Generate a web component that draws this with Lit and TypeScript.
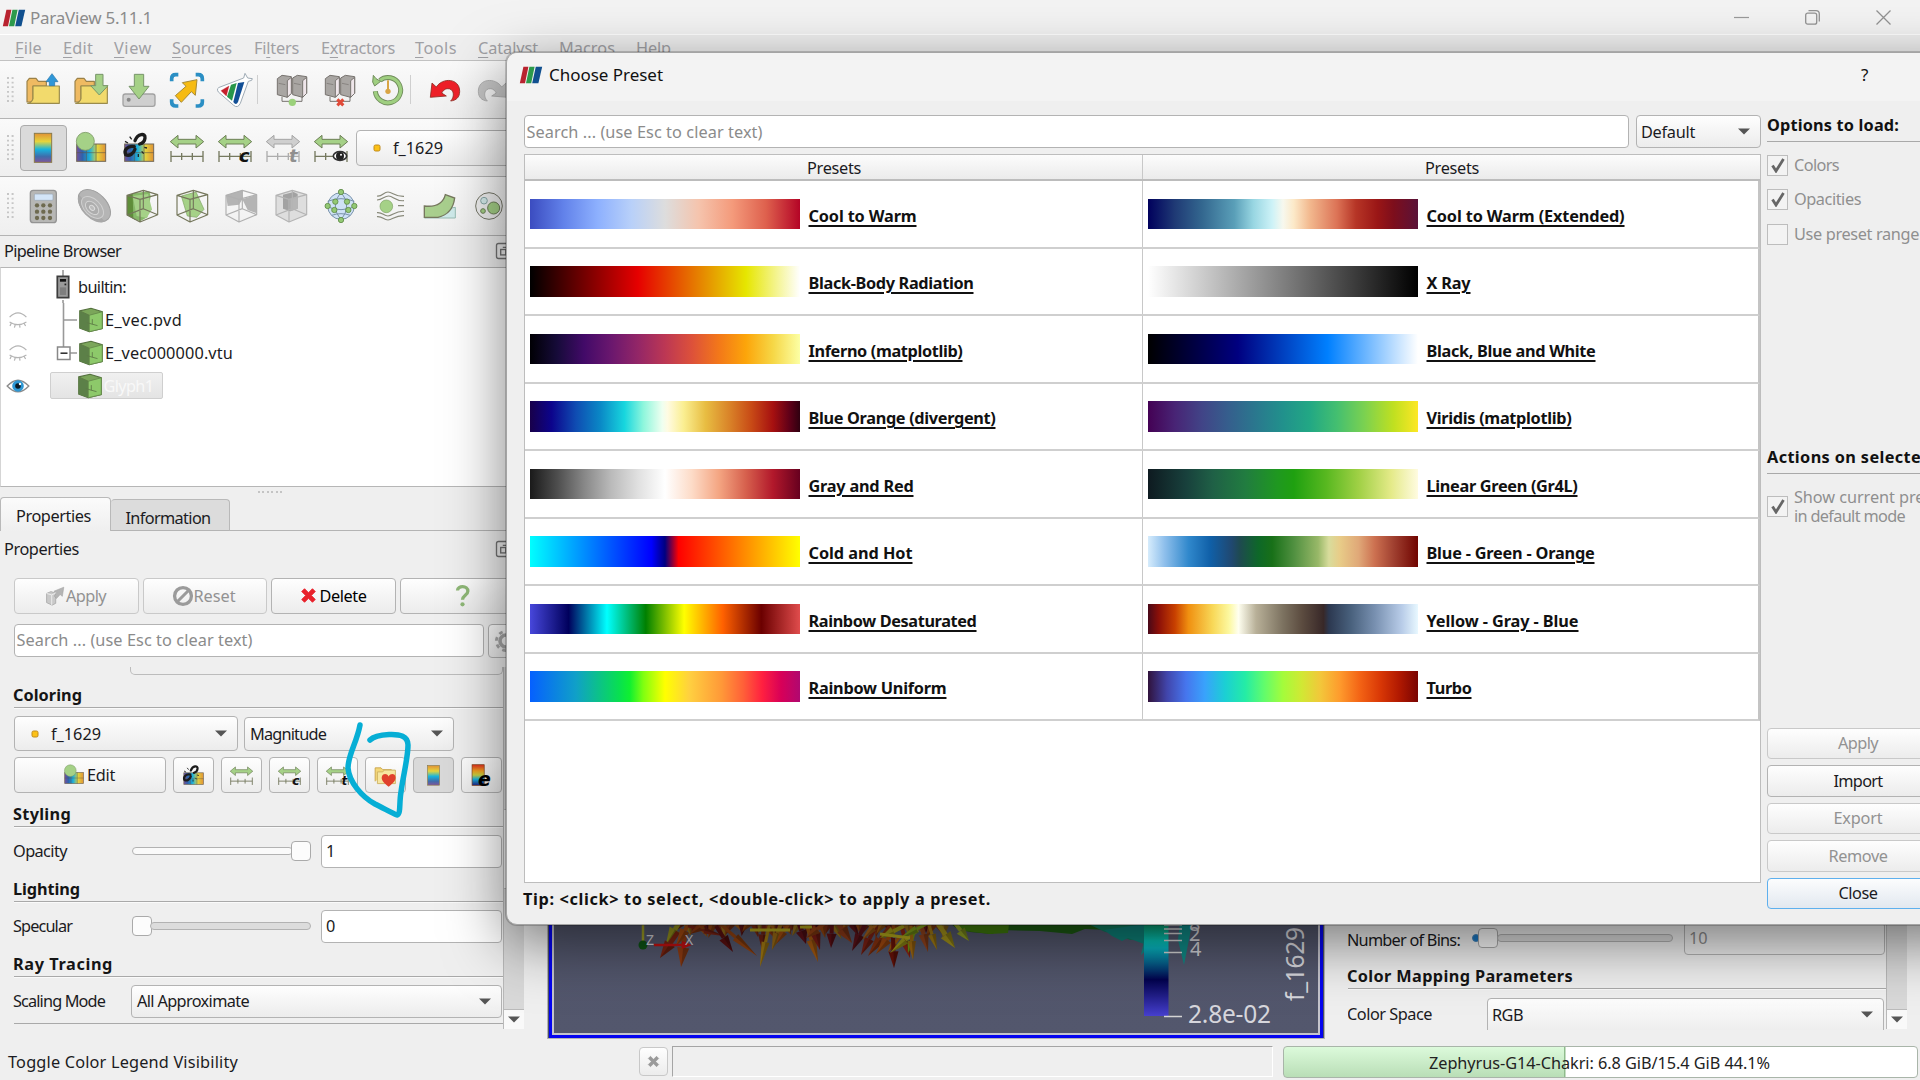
import { LitElement, html, svg, css, nothing } from "lit";
import { customElement, property } from "lit/decorators.js";

/** Text run that tracks its letters so that it spans exactly `w` pixels. */
@customElement("fit-text")
class FitText extends LitElement {
  @property({ type: Number }) w = 0;
  static styles = css`
    :host { display: inline-block; white-space: pre; flex: none; }
  `;
  render() {
    return html`<slot></slot>`;
  }
  firstUpdated() {
    if (!this.w) return;
    const n = (this.textContent || "").length;
    this.style.letterSpacing = "0px";
    const natural = this.getBoundingClientRect().width;
    this.style.letterSpacing = ((this.w - natural) / n).toFixed(3) + "px";
  }
}

const t = (s: string, w: number) => html`<fit-text w=${w}>${s}</fit-text>`;

/* ---------- icons, drawn in a 120-unit box around the origin ---------- */
const G = "#a5d187", GS = "#6d7f56";

const rangeIcon = (extra: any = nothing, fill = G, stroke = GS, rule = "#75795f") => svg`
  <path d="M-50-19l23-19v12h54v-12l23 19-23 19v-12h-54v12z" fill=${fill} stroke=${stroke} stroke-width="3"/>
  <path d="M-48 25H48M-48 9V42M48 9V42M-16 15V36M16 15V36" fill="none" stroke=${rule} stroke-width="4"/>${extra}`;

const mapBlock = svg`
  <rect x="-43" y="-12" width="87" height="52" fill="url(#hmap)" stroke="#746a58" stroke-width="3"/>
  <path d="M-43 14H44M-14-12V40M15-12V40" stroke="#5b5648" stroke-width="2.5" opacity=".7"/>`;

const chain = svg`
  <path d="M-12-22C-4-44 20-46 18-30C17-20 10-14 2-12M-14-4C-36-8-46 8-40 20C-28 26-16 16-12 4" fill="none" stroke="#1c1c1c" stroke-width="10" stroke-linecap="round"/>
  <path d="M-28-34l6 8M-42-20l9 5M8 10l6 7M16-2l8 2M-2 18v9" stroke="#222" stroke-width="4"/>`;

const server = (badge: any) => svg`
  <g stroke="#77736f" stroke-width="3" stroke-linejoin="round">
    <path d="M-44-34l14-10 28 4v50l-12 12-30-8z" fill="#a9a6a3"/><path d="M-14-28l12-10v48l-12 12z" fill="#efe6ea"/>
    <path d="M2-36l14-8 28 4v50l-12 12-30-8z" fill="#a9a6a3"/><path d="M32-28l12-10v48l-12 12z" fill="#efe6ea"/>
    <path d="M-30 20v14H30V20" fill="none"/>
    <path d="M-40-20l20 4M6-20l20 4" stroke-width="2"/>
  </g>${badge}`;

const folder = svg`
  <path d="M-48 36V-26l7-9h20l7 9h24v14h-40v48z" fill="#efba62" stroke="#9a8148" stroke-width="3.5" stroke-linejoin="round"/>
  <path d="M-30-12H49V40H-46c10-2 14-6 16-14z" fill="#f2da6c" stroke="#9a8b4c" stroke-width="3.5" stroke-linejoin="round"/>`;

const wire = (c: string) => svg`<path d="M-45-32L4-47 47-34V26L-6 48-45 27zM-45-32L-6-20 47-34M-6-20V48M4-47V8M-45 27L4 8 47 26" fill="none" stroke=${c} stroke-width="3.5" stroke-linejoin="round"/>`;

const smallCube = svg`
  <path d="M-52-42L0-54 52-38V40L-8 54-52 38z" fill="#7ba65a" stroke="#55713f" stroke-width="5"/>
  <path d="M-52-42L-8-22V54L-52 38z" fill="#5c8048"/>
  <path d="M-8-22L52-38V40L-8 54z" fill="#8dc96a" stroke="#658a4a" stroke-width="4"/>
  <path d="M-8-22L-52-42M6 20V-4M-20 12L30 26" stroke="#5d7a45" stroke-width="4"/>`;

const icons: Record<string, any> = {
  open: svg`${folder}<path d="M27-49l18 24h-10v12h-16v-12h-10z" fill="#2f97d8" stroke="#2473a8" stroke-width="2"/>`,
  load: svg`${folder}<path d="M14-47h22v34h15l-26 28-26-28h15z" fill=${G} stroke="#78956a" stroke-width="3"/>`,
  save: svg`<rect x="-48" y="12" width="96" height="37" rx="7" fill="#cfcfcf" stroke="#a2a2a2" stroke-width="4"/><circle cx="-31" cy="29" r="6" fill="#888"/>
    <path d="M-14-47h28v36h16L0 27l-30-38h16z" fill=${G} stroke="#78956a" stroke-width="3"/>`,
  zoomfit: svg`<path d="M-46-26v-8q0-12 12-12h8M26-46h8q12 0 12 12v8M46 28v8q0 12-12 12h-8M-26 48h-8q-12 0-12-12v-8" fill="none" stroke="#2b8fc4" stroke-width="11"/>
    <path d="M30-31L25 16 13 5-17 37-35 17-3-11-14-22z" fill="#f6bb12" stroke="#a88a34" stroke-width="3"/>`,
  flask: svg`<path d="M30-50l8 14 14 2q2 6-12 8l-24 66q-8 16-20 6L-50 6q-8-12 8-16L26-36z" fill="#fff" stroke="#9fabb5" stroke-width="3" stroke-linejoin="round"/>
    <path d="M-42 2L-18-12l-8 30z" fill="#c5202c" stroke="#c5202c"/><path d="M-12-16L5-21-9 32-24 20z" fill="#27964a"/><path d="M9-21L28-24 9 36Q3 48-5 36z" fill="#124f96"/>`,
  connect: server(svg`<circle cx="1" cy="37" r="11" fill="#9bd17b"/>`),
  disconnect: server(svg`<path d="M-8 28L10 46M10 28L-8 46" stroke="#e04a38" stroke-width="9"/>`),
  clock: svg`<path d="M-24-29A38 38 0 1 1-38 4" fill="none" stroke="#718d5c" stroke-width="15"/><path d="M-24-29A38 38 0 1 1-38 4" fill="none" stroke="#9fcf80" stroke-width="9.5"/>
    <path d="M-44-44l8 10 14 8-18 14-6-12z" fill="#9fcf80" stroke="#718d5c" stroke-width="3"/><path d="M0-29v32" stroke="#d9a544" stroke-width="6"/><circle cx="0" cy="4" r="8" fill="#d9a544"/>`,
  undo: svg`<path d="M-44 22L-39-21l13 12C-8-38 44-36 44 4 44 22 34 31 17 33 30 20 28-6 6-4-2-3-6 3-10 9L4 18z" fill="#ee2028" stroke="#8e2b22" stroke-width="2.5"/>`,
  redo: svg`<path transform="scale(-1,1)" d="M-44 22L-39-21l13 12C-8-38 44-36 44 4 44 22 34 31 17 33 30 20 28-6 6-4-2-3-6 3-10 9L4 18z" fill="#c4c4c4" stroke="#a8a8a8" stroke-width="2.5"/>`,
  legend: svg`<rect x="-26" y="-44" width="52" height="87" fill="url(#vmap)" stroke="#8a7b4a" stroke-width="3"/>`,
  editmap: svg`${mapBlock}<circle cx="-17" cy="-20" r="27" fill=${G} stroke="#7d9a68" stroke-width="2.5"/>`,
  sepmap: svg`${mapBlock}${chain}`,
  range: rangeIcon(),
  rangeC: rangeIcon(svg`<text x="12" y="42" class="glyph">c</text>`),
  rangeT: rangeIcon(svg`<text x="18" y="42" class="glyph">t</text>`),
  rangeTg: rangeIcon(svg`<text x="18" y="42" class="glyph dim">t</text>`, "#cfcfcf", "#a4a4a4", "#adadad"),
  rangeEye: rangeIcon(svg`<ellipse cx="27" cy="24" rx="20" ry="13" fill="#fff" stroke="#333" stroke-width="5"/><circle cx="27" cy="24" r="12" fill="#222"/><circle cx="30" cy="20" r="3" fill="#fff"/>`),
  calc: svg`<rect x="-38" y="-47" width="78" height="97" rx="9" fill="#b7b7b5" stroke="#949494" stroke-width="4"/><rect x="-26" y="-36" width="56" height="19" rx="3" fill="#d3e5f8" stroke="#9aa6b4" stroke-width="2"/>
    <g fill="#6e6a50">${[-2, 17, 36].map((y) => [-18, 1, 21].map((x) => svg`<circle cx=${x} cy=${y} r="6.5"/>`))}</g>`,
  contour: svg`<g transform="rotate(45)"><ellipse cx="2" cy="-4" rx="58" ry="36" fill="#b5b5b5" stroke="#9e9e9e" stroke-width="3"/><path d="M-52 6a56 34 0 0 0 110 2" fill="#a8a8a8"/>
    <ellipse cx="2" cy="4" rx="40" ry="24" fill="#b4b4b4" stroke="#d0d0d0" stroke-width="3"/><ellipse cx="2" cy="6" rx="24" ry="15" fill="#adadad" stroke="#d4d4d4" stroke-width="3"/><ellipse cx="2" cy="6" rx="9" ry="6" fill="#bcbcbc" stroke="#dcdcdc" stroke-width="3"/></g>`,
  clip: svg`<path d="M-45-32L2-46-22-40-26 38-45 27z" fill="#5f8e3a"/><path d="M-45-32L-26-30-20 42-45 27z" fill="#5f8e3a"/><path d="M-28-38L22-44 26-30 16 34-6 46-26 38z" fill="#86b868"/><path d="M-28-30L18-36 30 10 14 36-16 30z" fill=${G}/>${wire("#75775c")}`,
  slice: svg`<path d="M-32-30L12-42 36 10 14 34-14 30z" fill=${G} stroke="#7da262" stroke-width="2"/>${wire("#75775c")}`,
  threshold: svg`<path d="M-45-32L4-47 4-20-6-4-40 0zM4-20L47-34V22L20 12z" fill="#b4b4b4"/>${wire("#b0b0b0")}`,
  subset: svg`<path d="M-45-32L4-47 47-34V26L-6 48-45 27z" fill="#dedede"/><path d="M-24-34L8-42 20-36V8L-2 16-24 8z" fill="#a2a2a2"/><path d="M-2-20L20-30V8L-2 16z" fill="#b6b6b6"/>${wire("#b4b4b4")}`,
  glyphs: svg`<circle r="40" fill="#cfe2f6" stroke="#7b93ab" stroke-width="3"/><path d="M-46 0Q0 22 46 0M-40-14Q0-30 40-14M0-42Q-34 0 0 42M0-42Q34 0 0 42M-28 28Q0 18 28 28" fill="none" stroke="#7891a8" stroke-width="3"/>
    <g fill="#93c974" stroke="#5f8a48" stroke-width="2.5"><circle cy="-42" r="8"/><circle cy="42" r="8"/><circle cx="-40" r="8"/><circle cx="40" r="8"/><circle cx="-20" cy="12" r="8"/><circle cx="22" cy="12" r="8"/><circle cx="-17" cy="-13" r="8"/><circle cx="18" cy="-13" r="8"/></g>`,
  stream: svg`<g fill="none" stroke="#88897a" stroke-width="3.5"><path d="M-39-30C-22-28-20-42-6-42S14-28 42-29M-39-18C-22-18-18-30-4-30S16-14 42-16M-39 20C-22 18-20 30-6 30S16 14 42 16M-39 32C-22 30-20 42-6 42S14 28 42 29M24-1H42"/></g><circle cx="-11" cy="1" r="19" fill=${G} stroke="#7da262" stroke-width="2"/>`,
  warp: svg`<path d="M-46 36H46V4L8 10z" fill="#cfeaea" stroke="#98bcb4" stroke-width="3"/><path d="M-47 0Q6 6 16-34L44-24Q38 24-6 34H-47z" fill="#a9cf8e" stroke="#76785e" stroke-width="4"/>`,
  group: svg`<circle r="40" fill="#f0f0f0" stroke="#77786a" stroke-width="3"/><circle cx="14" cy="6" r="18" fill=${G} stroke="#6d7f56" stroke-width="3"/><circle cx="-15" cy="-16" r="10" fill="#d6ecec" stroke="#8aa8a8" stroke-width="3"/><circle cx="-18" cy="15" r="7" fill=${G} stroke="#6d7f56" stroke-width="3"/>`,
  favorite: svg`<path d="M-46 26V-34h26l8 8h38v12" fill="#f4d878" stroke="#c8a24a" stroke-width="4"/><path d="M-36 36V-16h24l6-8h50V36z" fill="#f7e6a0" stroke="#cdb060" stroke-width="4"/>
    <path d="M14 50C-10 30-20 18-16 4-10-10 6-10 14 4 22-10 40-10 44 4 48 18 38 30 14 50z" fill="#e0402c"/>`,
  edge: svg`<rect x="-42" y="-48" width="54" height="92" fill="url(#jet)" stroke="#804018" stroke-width="3"/><text x="-16" y="46" class="glyph big">e</text>`,
  cube: smallCube,
  applyIcon: svg`<path d="M-46-14l24-10 26 8V40L-16 50-46 36z" fill="#c9c9c9" stroke="#a3a3a3" stroke-width="4"/><path d="M-46-14l28 8 22-10M-18-6V50" fill="none" stroke="#ededed" stroke-width="5"/><path d="M-6-26L48-48 40 2 28-8 8 14-4 0 10-18z" fill="#b4b4b4" stroke="#a0a0a0" stroke-width="3"/>`,
  reset: svg`<circle r="46" fill="none" stroke="#9b9b9b" stroke-width="18"/><path d="M30-30L-30 30" stroke="#9b9b9b" stroke-width="16"/>`,
  cross: svg`<path d="M-28-48L0-20 28-48 48-28 20 0 48 28 28 48 0 20-28 48-48 28-20 0-48-28z" fill="currentColor" stroke="currentColor" stroke-width="6" stroke-linejoin="round"/>`,
  help: svg`<path d="M-26-26C-26-52 28-54 28-22C28-2 0 0 0 22" fill="none" stroke="#8fb877" stroke-width="17"/><circle cy="46" r="11" fill="#8fb877"/>`,
  gear: svg`<circle r="30" fill="none" stroke="#a9a9a9" stroke-width="18"/><circle r="48" fill="none" stroke="#a9a9a9" stroke-width="14" stroke-dasharray="19 18.7"/>`,
  float: svg`<rect x="-50" y="-50" width="100" height="100" rx="14" fill="none" stroke="#747474" stroke-width="9"/><rect x="-22" y="-10" width="34" height="36" fill="none" stroke="#747474" stroke-width="9"/><path d="M-8-24H28V10" fill="none" stroke="#747474" stroke-width="9"/>`,
  logo: svg`<path d="M-38-41H-13L-30 41H-56z" fill="#b8232f"/><path d="M-8-41H18L1 41H-25z" fill="#2c9a4b"/><path d="M24-41H56L37 41H6z" fill="#11508f"/>`,
  eyeOpen: svg`<path d="M-54 0Q0-58 54 0Q0 58-54 0z" fill="#fff" stroke="#8c8c8c" stroke-width="7"/><circle r="29" fill="#2d97d4"/><circle r="14" fill="#0a1a26"/><circle cx="10" cy="-10" r="6" fill="#fff"/>`,
  eyeShut: svg`<path d="M-42-14Q0-58 42-14M-42 10Q0 36 42 10M-34 16l-6 14M-14 24l-4 14M8 24l2 14M30 16l8 14" fill="none" stroke="#b4b4b4" stroke-width="6"/>`,
  rack: svg`<rect x="-30" y="-56" width="60" height="112" fill="#9a9a9a" stroke="#3c3c3c" stroke-width="9"/><rect x="-16" y="-42" width="32" height="14" fill="#111"/><rect x="8" y="-18" width="9" height="9" fill="#222"/><rect x="-16" y="2" width="32" height="40" fill="#7e7e7e"/>`,
};

const ic = (name: string, size = 40) => html`<svg class="ic" width=${size} height=${size} viewBox="-60 -60 120 120">${icons[name]}</svg>`;
const dot = html`<svg width="8" height="8" viewBox="0 0 8 8"><rect x="1" y="1" width="6" height="6" rx="1.5" fill="#fcc117" stroke="#c08a1c"/></svg>`;
const caret = html`<svg class="caret" width="12" height="7" viewBox="0 0 12 7"><path d="M0 .5H12L6 6.5z" fill="#555"/></svg>`;

/* ---------- presets ---------- */
type Preset = [string, number, string];
const presets: [Preset, Preset][] = [
  [["Cool to Warm", 108, "#3b4cc0,#6282ea 12.5%,#8db0fe 25%,#b8d0f9 37.5%,#dddddd 50%,#f5c4ad 62.5%,#f49a7b 75%,#de604d 87.5%,#b40426"],
   ["Cool to Warm (Extended)", 198, "#00005c,#1f3a75 10%,#33678f 20%,#5a9fb8 32%,#98d6e2 39%,#cdf2f7 46%,#f7f8ee 50%,#fce9c8 54%,#f2b88e 60%,#dc7356 70%,#b63526 77%,#9a1616 85%,#7d0e1c 91%,#5a1238"]],
  [["Black-Body Radiation", 165, "#000,#e60000 40%,#e6e600 80%,#fff"], ["X Ray", 44, "#fff,#000"]],
  [["Inferno (matplotlib)", 154, "#000004,#160b39 10%,#420a68 20%,#6a176e 30%,#932667 40%,#bc3754 50%,#dd513a 60%,#f37819 70%,#fca50a 80%,#f6d746 90%,#fcffa4"],
   ["Black, Blue and White", 169, "#000,#000080 33.3%,#0080ff 66.6%,#fff"]],
  [["Blue Orange (divergent)", 187, "#18004a,#0c048c 8%,#0f4cb2 17%,#0a88c6 26%,#17d6de 35%,#8ef6dc 42%,#effff0 49%,#fffbe2 51%,#faee90 57%,#e8bd42 65%,#d98228 74%,#c84a16 82%,#a61010 90%,#600018 96%,#2f0010"],
   ["Viridis (matplotlib)", 145, "#440154,#482475 10%,#414487 20%,#355f8d 30%,#2a788e 40%,#21918c 50%,#22a884 60%,#44bf70 70%,#7ad151 80%,#c0e020 91%,#fde725"]],
  [["Gray and Red", 105, "#1a1a1a,#4d4d4d 10%,#878787 20%,#bababa 30%,#e0e0e0 40%,#fff 50%,#fddbc7 60%,#f4a582 70%,#d6604d 80%,#b2182b 90%,#67001f"],
   ["Linear Green (Gr4L)", 151, "#0e1a20,#18403c 14%,#1f6046 24%,#217c40 36%,#1f9820 48%,#1fa010 54%,#58b820 66%,#a0d045 78%,#e4ea88 90%,#fffbe0"]],
  [["Cold and Hot", 104, "#0ff,#00f 45%,#000080 50%,#f00 55%,#ff0"],
   ["Blue - Green - Orange", 168, "#d6ecfc,#90c0ec 6%,#3088cc 15%,#1060a8 23%,#204870 31%,#1e4a50 34%,#0e6828 41%,#187018 46%,#509040 54%,#98b868 63%,#d8dc9c 67%,#e8cc88 71%,#e0a878 78%,#cc7050 84%,#a04030 91%,#700400"]],
  [["Rainbow Desaturated", 168, "#4747db,#00005c 14.3%,#0ff 28.5%,#008000 42.9%,#ff0 57.1%,#ff6100 71.4%,#6b0000 85.7%,#e04c4c"],
   ["Yellow - Gray - Blue", 152, "#480818,#8c1008 4%,#c84000 10%,#f09010 15%,#f8d858 24%,#fcf8a0 30%,#fffff0 33.5%,#b8b098 40%,#7c7260 50%,#5c4c40 57%,#382828 65%,#2c3850 67%,#48607c 75%,#7890b0 84%,#b8cce8 94%,#e8f8ff"]],
  [["Rainbow Uniform", 138, "#0560ff,#10a0c8 17%,#08e050 33%,#10f030 37%,#80ff10 42%,#ff0 50%,#ffd040 59%,#ff9838 71%,#ff6038 79%,#ff2040 86%,#d80058 93%,#b00870"],
   ["Turbo", 45, "#30123b,#4145ab 7%,#4675ed 14%,#39a2fc 21%,#1bcfd4 28.5%,#24eca6 36%,#61fc6c 43%,#a4fc3b 50%,#d1e834 57%,#f3c63a 64%,#fe9b2d 71%,#f36315 78.5%,#d93806 86%,#b11901 93%,#7a0402"]],
];

/* Cone glyphs in the 3D view: base x, base y, tip x, tip y, half width, colour. */
const cones: [number, number, number, number, number, string][] = [
  [682, 918, 666, 944, 6, "#93901c"], [678, 932, 660, 958, 6, "#7c2411"], [685, 932, 681, 967, 6, "#8e3b12"], [692, 918, 676, 946, 5, "#a34a10"],
  [688, 926, 724, 936, 3, "#7d2315"], [716, 926, 733, 952, 5, "#5a1010"], [718, 922, 757, 956, 4, "#93420f"], [708, 922, 690, 934, 4, "#913a10"],
  [764, 922, 762, 950, 5, "#6f2113"], [770, 922, 760, 967, 4, "#a07812"], [782, 920, 772, 950, 5, "#9a6a14"], [790, 922, 776, 944, 4, "#a24e12"],
  [798, 920, 806, 944, 6, "#5e1018"], [806, 922, 818, 962, 5, "#a2580f"], [812, 920, 820, 950, 5, "#7a1c14"], [832, 922, 831, 948, 5, "#601016"],
  [834, 918, 852, 943, 6, "#8d3a18"], [826, 922, 806, 938, 5, "#9b4414"], [866, 922, 852, 951, 5, "#5c1219"], [876, 926, 861, 955, 5, "#7a2013"],
  [890, 926, 868, 956, 5, "#87310f"], [896, 928, 876, 954, 5, "#a0490f"], [900, 936, 888, 952, 4, "#a2560f"], [893, 938, 894, 968, 5, "#661208"],
  [902, 928, 910, 958, 5, "#8d2413"], [918, 930, 890, 953, 4, "#a09a1a"], [914, 932, 908, 953, 4, "#6f9a12"], [911, 926, 913, 960, 4, "#a26a10"],
  [920, 920, 928, 952, 5, "#90421c"], [928, 922, 937, 950, 4, "#a07a14"], [938, 924, 955, 948, 6, "#a2921a"], [954, 922, 969, 941, 5, "#8f9f22"],
  [904, 926, 880, 938, 5, "#a29c18"], [930, 922, 900, 938, 4, "#80a01a"], [882, 918, 862, 940, 4, "#a9621a"],
];
/* Short, shallow cones that fill the crowded strip above the long ones. */
const fill = ["#7c2a12", "#94450f", "#5e1417", "#a05a12", "#8a3512", "#98701a"];
const strip = Array.from({ length: 44 }, (_, i): (typeof cones)[number] => {
  const x = 682 + i * 6.1, lean = ((i * 7) % 11) - 5;
  return [x - lean * 1.2, 914, x + lean * 1.4, 931 + ((i * 5) % 9), 4.5, fill[(i * 5) % 6]];
});

const cone = ([x1, y1, x2, y2, w, c]: (typeof cones)[number]) => {
  const dx = x2 - x1, dy = y2 - y1, l = Math.hypot(dx, dy), nx = (-dy / l) * w, ny = (dx / l) * w;
  const mx = x1 + dx * 0.45, my = y1 + dy * 0.45;
  return svg`<path d="M${x1} ${y1}L${mx} ${my}" stroke=${c} stroke-width=${w * 0.8}/>
    <path d="M${mx + nx} ${my + ny}L${x2} ${y2}L${mx - nx} ${my - ny}z" fill=${c}/>
    <path d="M${mx} ${my}L${x2} ${y2}L${mx - nx} ${my - ny}z" fill="#000" opacity=".22"/>`;
};

@customElement("app-root")
class AppRoot extends LitElement {
  static styles = css`
    :host {
      display: block; position: relative; width: 1920px; height: 1080px; overflow: hidden; background: #efefef;
      font: 16.3px/20px "Noto Sans", "Open Sans", sans-serif; color: #1b1b22;
    }
    * { box-sizing: border-box; }
    svg { display: block; flex: none; }
    fit-text { transform: translateX(-1px); }
    .defs { position: absolute; width: 0; height: 0; }
    .glyph { font: italic 700 54px "DejaVu Sans", sans-serif; fill: #111; }
    .glyph.dim { fill: #8f8f8f; }
    .glyph.big { font-size: 84px; fill: #000; }
    .row { display: flex; align-items: center; }
    .window { display: flex; flex-direction: column; height: 1080px; }

    .titlebar { height: 35px; background: #f3f3f3; border-bottom: 1px solid #fff; color: #8b8b8b; font-size: 17px; padding: 1px 13px 0 2px; }
    .titlebar .name { padding-left: 5px; flex: 1; }
    .winbtns { display: flex; gap: 56px; padding-right: 16px; padding-bottom: 1px; }
    .menubar { height: 26px; padding: 1px 0 0 16px; border-bottom: 1px solid #c2c2c2; color: #a0a0a4; flex: none; }
    .menubar > div { flex: none; }
    .menubar u { text-underline-offset: 3px; }
    .toolbar { height: 58.2px; flex: none; background: linear-gradient(#fafafa, #efefef); border-bottom: 1.5px solid #b4b4b4; }
    .grip { width: 19px; padding-left: 7px; flex: none; }
    .tool { width: 48px; display: flex; justify-content: center; flex: none; }
    .third .tool { width: 49.55px; }
    .third .grip { width: 18.5px; }
    .tool.on span { width: 47px; height: 46px; border: 1.5px solid #ababab; border-radius: 4px; background: #dadada; display: flex; align-items: center; justify-content: center; }
    .sep { width: 9px; height: 29px; flex: none; border-left: 1.5px solid #cfcfcf; margin-left: -2px; margin-right: 2px; }

    .field, .combo, .btn { border: 1.5px solid #b3b3b3; border-radius: 4px; display: flex; align-items: center; flex: none; }
    .field { background: #fff; color: #8b8b8b; padding: 0 2.5px; }
    .field.val { color: #222; padding-left: 4px; }
    .combo, .btn { background: linear-gradient(#fefefe, #ececec); }
    .combo .caret { margin-left: auto; }
    .btn { justify-content: center; }
    .btn.off { color: #929292; border-color: #c9c9c9; }
    .btn.on { background: #d9d9d9; }

    .work { display: flex; flex: 1; min-height: 0; }
    .left { width: 547px; height: 805px; overflow: hidden; display: flex; flex-direction: column; flex: none; }
    .docktitle { height: 31px; padding-left: 5px; flex: none; }
    .docktitle svg { margin-left: auto; margin-right: 34px; }
    .tree { height: 220.5px; flex: none; background: #fff; border: 1.5px solid #b6b6b6; border-left-color: #d5d5d5; padding-top: 2.5px; overflow: hidden; }
    .node { height: 33px; position: relative; }
    .eye { width: 33px; padding-left: 5px; flex: none; }
    .node .tip { width: 44px; height: 33px; flex: none; }
    .sel { height: 27px; width: 113px; margin-left: 15.5px; border: 1px solid #cfcfcf; border-radius: 2px; background: linear-gradient(#f0f0f0, #e4e4e4); padding-left: 26px; color: #f8f8f8; gap: 3px; }
    .splitter { height: 10px; display: flex; justify-content: center; align-items: center; gap: 2.5px; flex: none; padding-right: 7px; }
    .splitter i { width: 2px; height: 2px; background: #c4c4c4; }
    .tabs { height: 34px; display: flex; align-items: flex-end; flex: none; background: linear-gradient(#b4b4b4, #b4b4b4) left bottom / 100% 1.5px no-repeat; }
    .tab { border: 1.5px solid #b9b9b9; border-bottom: none; border-radius: 4px 4px 0 0; display: flex; justify-content: center; padding-right: 2px; }
    .tab.a { width: 111px; height: 34px; background: linear-gradient(#fbfbfb, #efefef); padding-top: 8px; }
    .tab.b { width: 119px; height: 32px; background: #dcdcdc; border-left: none; padding-top: 8px; border-bottom: 1.5px solid #b4b4b4; }
    .actions { display: flex; gap: 4px; padding: 10.5px 0 0 14px; height: 46.5px; flex: none; }
    .actions .btn { height: 36px; gap: 4px; }
    .actions .btn.off { gap: 1px; padding-right: 2px; }
    .search { display: flex; gap: 4px; padding: 10px 0 0 14px; flex: none; }
    .search .field { width: 470px; height: 33px; }
    .scroll { display: flex; flex: 1; margin-top: 9.5px; min-height: 0; }
    .props { width: 503px; padding-left: 14px; flex: none; }
    .bracket { margin-left: 116px; height: 8px; border: 1.5px solid #bcbcbc; border-top: none; border-radius: 0 0 5px 5px; }
    .head { height: 24px; border-bottom: 1.5px solid #a9a9a9; font-weight: 700; color: #151515; line-height: 22px; box-shadow: 0 1px #fafafa; }
    .line { display: flex; align-items: center; }
    .track { height: 8px; border: 1.5px solid #b2b2b2; border-radius: 4px; background: #dcdcdc; }
    .slider { display: flex; align-items: center; width: 179px; }
    .slider .track { flex: 1; }
    .knob { width: 20px; height: 20px; border: 1.5px solid #aaa; border-radius: 4px; background: #fcfcfc; flex: none; }
    .vscroll { width: 21px; height: 362px; border-left: 1.5px solid #b9b9b9; background: #d9d9d9; display: flex; flex-direction: column; justify-content: flex-end; }
    .vscroll b { height: 20px; display: flex; align-items: center; justify-content: center; background: #f9f9f9; border-top: 1.5px solid #bbb; }
    .vscroll .caret { margin-left: 0; }
    .thumb { flex: none; height: 80px; margin-bottom: 120px; background: #f4f4f4; border: 1.5px solid #bbb; border-left: none; }

    .view { width: 778px; height: 803px; border: 1px solid #b4b4b4; flex: none; background: #4c5064; display: flex; align-items: flex-end; }
    .frame { width: 774px; height: 801px; border: 3.5px solid #0505f0; display: flex; align-items: flex-end; margin: 0 0 0 1px; background: #c4c4cc; padding: 0 1.5px 1.5px; }
    .view .vt { font: 24.5px "Noto Sans", "Open Sans", sans-serif; fill: #d6d6dc; }
    .view .vs { font: 20px "Noto Sans", "Open Sans", sans-serif; fill: #d0d0d6; }
    .view .va { font: 14px "Noto Sans", "Open Sans", sans-serif; fill: #d0d0d6; }
    .right { flex: 1; display: flex; height: 794px; padding-left: 23px; align-items: flex-start; }
    .editor { width: 538px; height: 794px; display: flex; flex-direction: column; justify-content: flex-end; }
    .status { height: 39px; flex: none; padding: 2px 0 0 9px; display: flex; align-items: center; }

    .dialog { position: absolute; left: 506px; top: 52px; width: 1480px; height: 873px; background: #efefef; border: 1px solid #a4a4a4; border-radius: 11px; box-shadow: 0 0 0 1px rgba(0, 0, 0, 0.18), 0 18px 60px rgba(0, 0, 0, 0.5); color: #1b1b22; }
    .dhead { height: 48px; border-radius: 11px 11px 0 0; background: #f3f3f3; padding: 0 0 4px 12px; color: #101010; font-size: 17px; }
    .dhead .q { margin-left: 1197px; }
    .dbody { display: flex; gap: 6px; padding: 14px 0 0 17px; }
    .main { width: 1237px; display: flex; flex-direction: column; }
    .find { display: flex; gap: 7px; height: 33px; }
    .grid { margin-top: 6px; height: 729px; background: #fff; border: 1.5px solid #bdbdbd; }
    .gh { display: grid; grid-template-columns: 617px 1fr; height: 26px; background: linear-gradient(#fcfcfc, #ebebeb); border-bottom: 2px solid #bcbcbc; }
    .gh div { display: flex; justify-content: center; padding-top: 2px; align-items: center; padding-left: 3px; }
    .gh div + div { border-left: 1.5px solid #c8c8c8; }
    .gr { display: grid; grid-template-columns: 617px 1fr; height: 67.5px; border-bottom: 2px solid #cfcfcf; border-right: 2px solid #c4c4c4; }
    .cell { display: flex; align-items: center; gap: 9px; padding-left: 4.5px; }
    .cell + .cell { border-left: 1.5px solid #c8c8c8; }
    .sw { width: 270px; height: 30.5px; flex: none; }
    .cell fit-text, .tipline { font-weight: 700; }
    .cell fit-text { transform: none; text-decoration: underline; text-decoration-thickness: 1.6px; text-underline-offset: 3px; padding-top: 4px; color: #111; }
    .tipline { padding-top: 6px; color: #111; }
    .side { width: 184px; display: flex; flex-direction: column; }
    .shead { height: 27px; border-bottom: 1.5px solid #a9a9a9; font-weight: 700; color: #111; flex: none; }
    .shead fit-text { transform: none; }
    .check { display: flex; align-items: center; gap: 7px; color: #8f8f8f; height: 34.5px; line-height: 19px; }
    .box { width: 21px; height: 21px; border: 1.5px solid #bdbdbd; background: #f3f3f3; flex: none; display: flex; align-items: center; justify-content: center; }
    .dbtns { display: flex; flex-direction: column; gap: 6px; }
    .dbtns .btn { height: 31.5px; }
    .dbtns .close { border-color: #5eb0ee; background: linear-gradient(#fcfdfe, #e2e8ef); }
    .scribble { position: absolute; left: 335px; top: 710px; }
  `;

  private grip() {
    return html`<div class="grip"><svg width="8" height="26" viewBox="0 0 8 26">${[0, 4.6, 9.2, 13.8, 18.4, 23].map((y) => svg`<path d="M0 ${y + 1}h2M4.6 ${y + 1}h2" stroke="#c6c6c6" stroke-width="1.8"/>`)}</svg></div>`;
  }
  private tools(names: string[]) {
    return names.map((n) => (n === "|" ? html`<div class="sep"></div>` : html`<div class="tool">${ic(n)}</div>`));
  }
  private check(on: boolean) {
    return html`<div class="box">${on ? html`<svg width="14" height="15" viewBox="0 0 14 15"><path d="M1.5 7.5L5 13 12.5 1" fill="none" stroke="#666" stroke-width="2.8"/></svg>` : nothing}</div>`;
  }
  private num(label: string, lw: number, right: boolean, val: string) {
    return html`<div class="line" style="height:32px;margin:8px 0 11px">
      <div style="width:117.5px;padding-bottom:0">${t(label, lw)}</div>
      <div class="slider">${right
        ? html`<div class="track" style="background:#fafafa;margin-right:-2px"></div><div class="knob"></div>`
        : html`<div class="knob"></div><div class="track" style="margin-left:-2px"></div>`}</div>
      <div class="field val" style="width:181px;height:33px;margin-left:10.5px">${val}</div></div>`;
  }

  render() {
    const menu: [string, number, number, number][] = [
      ["File", 0, 27, 48], ["Edit", 0, 30, 51], ["View", 0, 38, 58], ["Sources", 0, 60, 82], ["Filters", 2, 45, 67],
      ["Extractors", 1, 74, 94], ["Tools", 0, 42, 63], ["Catalyst", 0, 60, 81], ["Macros", 0, 56, 77], ["Help", 0, 35, 60],
    ];
    return html`
      <svg class="defs"><defs>
        <linearGradient id="vmap" x2="0" y2="1"><stop offset="0" stop-color="#e09236"/><stop offset=".28" stop-color="#e6d43c"/><stop offset=".42" stop-color="#7fc58c"/><stop offset=".55" stop-color="#18b4de"/><stop offset=".8" stop-color="#3f6cab"/><stop offset="1" stop-color="#7f559c"/></linearGradient>
        <linearGradient id="hmap"><stop offset="0" stop-color="#75509a"/><stop offset=".2" stop-color="#2f62ac"/><stop offset=".45" stop-color="#1cb0da"/><stop offset=".72" stop-color="#e4d23e"/><stop offset="1" stop-color="#e09236"/></linearGradient>
        <linearGradient id="jet" x2="0" y2="1"><stop offset="0" stop-color="#e03020"/><stop offset=".3" stop-color="#f0a020"/><stop offset=".5" stop-color="#c8d040"/><stop offset=".7" stop-color="#18b0e0"/><stop offset="1" stop-color="#202080"/></linearGradient>
        <linearGradient id="bar" x2="0" y2="1"><stop offset="0" stop-color="#0c7a3c"/><stop offset=".26" stop-color="#06c2b8"/><stop offset=".33" stop-color="#08b4c0"/><stop offset=".64" stop-color="#02024e"/><stop offset="1" stop-color="#4740cf"/></linearGradient>
        <linearGradient id="bg3d" x2="0" y2="1"><stop offset="0" stop-color="#4b4d60"/><stop offset="1" stop-color="#53576d"/></linearGradient>
      </defs></svg>
      <div class="window">
        <div class="titlebar row">${ic("logo", 24)}<div class="name">${t("ParaView 5.11.1", 122)}</div>
          <div class="winbtns">
            <svg width="15" height="15"><path d="M0 7.5H15" stroke="#9a9a9a" stroke-width="1.2"/></svg>
            <svg width="15" height="15" fill="none" stroke="#929292" stroke-width="1.3"><rect x=".7" y="3.2" width="11" height="11" rx="2"/><path d="M3.5.7H11q3.3 0 3.3 3.3V11.500"/></svg>
            <svg width="15" height="15" stroke="#929292" stroke-width="1.3"><path d="M.5.5l14 14M14.500.5L.5 14.500"/></svg>
          </div></div>
        <div class="menubar row">${menu.map(([s, u, w, c]) => html`<div style="width:${c}px"><fit-text w=${w}>${s.slice(0, u)}<u>${s[u]}</u>${s.slice(u + 1)}</fit-text></div>`)}</div>
        <div class="toolbar row">${this.grip()}${this.tools(["open", "load", "save", "zoomfit", "flask", "|", "connect", "disconnect", "clock", "|", "undo", "redo"])}</div>
        <div class="toolbar row">${this.grip()}<div class="tool on"><span>${ic("legend")}</span></div>${this.tools(["editmap", "sepmap", "range", "rangeC", "rangeTg", "rangeEye"])}
          <div class="combo" style="width:260px;height:36px;margin-left:1px;padding-left:16px;gap:13px">${dot}${t("f_1629", 50)}</div></div>
        <div class="toolbar row third">${this.grip()}${this.tools(["calc", "contour", "clip", "slice", "threshold", "subset", "glyphs", "stream", "warp", "group"])}</div>
        <div class="work">
          <div class="left">
            <div class="docktitle row">${t("Pipeline Browser", 117)}${ic("float", 18)}</div>
            <div class="tree">
              <div class="node row"><div class="eye"></div><svg style="margin-left:17px" width="24" height="33" viewBox="0 0 24 33"><path d="M12-6V6M12 30V34" stroke="#999" stroke-width="1.6"/><g transform="translate(12 17) scale(.19)">${icons.rack}</g></svg><div style="margin-left:4px">${t("builtin:", 48)}</div></div>
              <div class="node row"><div class="eye">${ic("eyeShut", 24)}</div><svg class="tip" viewBox="33 0 44 33"><path d="M62.500 0V33M62.500 17H76" stroke="#999" stroke-width="1.6"/></svg>${ic("cube", 26)}<div style="margin-left:2px">${t("E_vec.pvd", 77)}</div></div>
              <div class="node row"><div class="eye">${ic("eyeShut", 24)}</div><svg class="tip" viewBox="33 0 44 33"><path d="M62.500 0V11M69 17H76" stroke="#999" stroke-width="1.6"/><rect x="56.500" y="11" width="12.500" height="12.500" fill="#fff" stroke="#888" stroke-width="1.5"/><path d="M59.500 17.200h7" stroke="#333" stroke-width="1.6"/></svg>${ic("cube", 26)}<div style="margin-left:2px">${t("E_vec000000.vtu", 128)}</div></div>
              <div class="node row"><div class="eye">${ic("eyeOpen", 24)}</div><div class="sel row">${ic("cube", 26)}<div style="margin-left:-1px">${t("Glyph1", 50)}</div></div></div>
            </div>
            <div class="splitter">${[1, 2, 3, 4, 5, 6].map(() => html`<i></i>`)}</div>
            <div class="tabs"><div class="tab a">${t("Properties", 75)}</div><div class="tab b">${t("Information", 85)}</div></div>
            <div class="docktitle row" style="height:36px">${t("Properties", 75)}${ic("float", 18)}</div>
            <div class="actions">
              <div class="btn off" style="width:125px">${ic("applyIcon", 22)}${t("Apply", 40)}</div>
              <div class="btn off" style="width:124px">${ic("reset", 22)}${t("Reset", 42)}</div>
              <div class="btn" style="width:125px;color:#000"><span style="color:#e8202a">${ic("cross", 17)}</span>${t("Delete", 47)}</div>
              <div class="btn" style="width:125px">${ic("help", 23)}</div>
            </div>
            <div class="search"><div class="field">${t("Search ... (use Esc to clear text)", 236)}</div><div class="btn" style="width:40px;height:34px;justify-content:flex-start;padding-left:5px">${ic("gear", 24)}</div></div>
            <div class="scroll"><div class="props">
              <div class="bracket"></div>
              <div class="head" style="margin-top:9px">${t("Coloring", 69)}</div>
              <div class="line" style="margin-top:8px;gap:6px">
                <div class="combo" style="width:224px;height:35px;padding:0 10px 0 16px;gap:13px">${dot}${t("f_1629", 50)}${caret}</div>
                <div class="combo" style="width:210px;height:34px;padding:0 10px 0 6px">${t("Magnitude", 76)}${caret}</div></div>
              <div class="line" style="margin-top:6px;gap:7px;width:520px">
                <div class="btn" style="width:152px;height:36px;gap:1px;padding-right:3px">${ic("editmap", 26)}${t("Edit", 28)}</div>
                ${["sepmap", "range", "rangeC", "rangeT", "favorite", "legend", "edge"].map((n) => html`<div class="btn ${n === "legend" ? "on" : ""}" style="width:41px;height:36px">${ic(n, 27)}</div>`)}</div>
              <div class="head" style="margin-top:10px">${t("Styling", 58)}</div>
              ${this.num("Opacity", 54, true, "1")}
              <div class="head">${t("Lighting", 67)}</div>
              ${this.num("Specular", 59, false, "0")}
              <div class="head">${t("Ray Tracing", 100)}</div>
              <div class="line" style="height:32px;margin:8px 0 6px"><div style="width:117px">${t("Scaling Mode", 92)}</div>
                <div class="combo" style="width:371px;height:33px;padding:0 10px 0 6px">${t("All Approximate", 112)}${caret}</div></div>
              <div style="border-top:1.5px solid #a9a9a9"></div>
            </div><div class="vscroll"><div class="thumb"></div><b>${caret}</b></div></div>
          </div>
          <div class="view"><div class="frame">
            <svg width="764" height="790" viewBox="554 243 764 790">
              <rect x="552" y="241" width="768" height="794" fill="url(#bg3d)"/>
              <path d="M940 915L1110 915V930L1085 929 1072 934 1040 931 1000 930 992 934 970 932 956 928z" fill="#1c5a12"/>
              <path d="M940 915H1010L1008 933 990 934 965 931z" fill="#3f7a0c"/><path d="M1070 915H1150V938L1130 940 1118 934 1105 932z" fill="#107a5c"/>
              <path d="M1104 930L1144 924V944L1128 938 1122 941 1112 936z" fill="#0e8078"/><path d="M1145 936L1141 955 1150 946zM1180 922L1192 924 1184 965 1178 940z" fill="#0f8884"/>
              ${strip.map(cone)}${cones.map(cone)}
              <path d="M750 930h40M880 934l30 4M800 927h12" stroke="#b4a81c" stroke-width="3"/>
              <path d="M643 920V941" stroke="#9c9c24" stroke-width="2.500"/><circle cx="643" cy="945" r="4.500" fill="#0d5214"/><path d="M654 945H684" stroke="#c01010" stroke-width="2.500"/><path d="M682 941L692 945 682 949z" fill="#c01010"/>
              <text x="646" y="945" class="va">Z</text><text x="685" y="945" class="va">X</text>
              <rect x="1144" y="915" width="24.500" height="101" fill="url(#bar)"/>
              <path d="M1164 925h18M1164 929h18M1164 933.500h18M1164 940.500h18M1164 952.500h18M1164 1016.500h18" stroke="#d4d4d4" stroke-width="1.7"/>
              <text x="1189" y="931" class="vs">8</text><text x="1189" y="941" class="vs">2</text><text x="1190" y="956" class="vs">4</text>
              <text x="1188" y="1023" class="vt" textLength="83">2.8e-02</text>
              <text transform="translate(1304 1001) rotate(-90)" class="vt" textLength="74">f_1629</text>
            </svg></div></div>
          <div class="right"><div class="editor">
            <div class="line" style="height:33px"><div style="width:124px;padding-top:3px">${t("Number of Bins:", 113)}</div>
              <div class="slider" style="width:201px"><div class="track" style="width:8px;flex:none;background:#1a78c4;border-color:#4a86b8"></div><div class="knob" style="margin-left:-2px"></div><div class="track" style="margin-left:-1px"></div></div>
              <div class="field" style="width:201px;height:33px;margin-left:11px;background:#efefef;padding-left:4px">10</div></div>
            <div class="head" style="margin-top:10.500px">${t("Color Mapping Parameters", 226)}</div>
            <div class="line" style="margin-top:8.500px;height:32px;overflow:hidden;align-items:flex-start"><div style="width:139px;padding-top:6px">${t("Color Space", 85)}</div>
              <div class="combo" style="width:397px;height:36px;padding:0 10px 2px 5px">${t("RGB", 31)}${caret}</div></div>
          </div><div class="vscroll" style="height:793px"><b>${caret}</b></div></div>
        </div>
        <div class="status"><div style="padding-top:1px">${t("Toggle Color Legend Visibility", 230)}</div>
          <div class="btn" style="width:29px;height:29px;margin-left:400px;color:#9a9a9a;border-color:#c8c8c8">${ic("cross", 13)}</div>
          <div style="width:601px;height:31px;margin-left:4px;border:1.5px solid #a5a5a5;border-right-color:#fff;border-bottom-color:#fff"></div>
          <div class="field" style="width:635px;height:32px;margin-left:10px;padding:2px 0 0;background:linear-gradient(90deg,#8fbc8c 1.500px,transparent 0) 280px 0/1.5px 100% no-repeat,linear-gradient(#dcfadb,#b9deb6) 0 0/280px 100% no-repeat,#fff;justify-content:center;color:#222;border-color:#a9b5a9">${t("Zephyrus-G14-Chakri: 6.8 GiB/15.4 GiB 44.1%", 341)}</div>
        </div>
      </div>

      <svg class="scribble" width="90" height="115" viewBox="335 710 90 115" fill="none" stroke="#06aed5" stroke-width="5.500" stroke-linecap="round" stroke-linejoin="round">
        <path d="M360 725C357 742 348 755 348 768C349 782 362 797 375 804C385 809 394 814 397 815C401 814 399 803 401 792C403 776 408 758 408 745C408 736 400 734 389 734.500C380 735 373 737 370 740"/></svg>

      <div class="dialog">
        <div class="dhead row">${ic("logo", 24)}<div style="padding-left:7px">${t("Choose Preset", 114)}</div><div class="q">?</div></div>
        <div class="dbody">
          <div class="main">
            <div class="find"><div class="field" style="flex:1">${t("Search ... (use Esc to clear text)", 236)}</div>
              <div class="combo" style="width:125px;padding:0 10px 0 5px">${t("Default", 54)}${caret}</div></div>
            <div class="grid">
              <div class="gh"><div>${t("Presets", 54)}</div><div>${t("Presets", 54)}</div></div>
              ${presets.map((r) => html`<div class="gr">${r.map(([n, w, g]) => html`<div class="cell"><div class="sw" style="background:linear-gradient(90deg,${g})"></div>${t(n, w)}</div>`)}</div>`)}
            </div>
            <div class="tipline">${t("Tip: <click> to select, <double-click> to apply a preset.", 468)}</div>
          </div>
          <div class="side">
            <div class="shead">${t("Options to load:", 132)}</div>
            <div style="padding-top:6px">
              <div class="check">${this.check(true)}${t("Colors", 45)}</div>
              <div class="check">${this.check(true)}${t("Opacities", 67)}</div>
              <div class="check">${this.check(false)}${t("Use preset range", 125)}</div></div>
            <div class="shead" style="margin-top:195px">${t("Actions on selected presets:", 237)}</div>
            <div class="check" style="height:66px">${this.check(true)}<div>${t("Show current preset", 153)}<br>${t("in default mode", 111)}</div></div>
            <div class="dbtns" style="margin-top:188px">
              <div class="btn off">${t("Apply", 40)}</div><div class="btn">${t("Import", 49)}</div><div class="btn off">${t("Export", 49)}</div><div class="btn off">${t("Remove", 59)}</div><div class="btn close">${t("Close", 39)}</div></div>
          </div>
        </div>
      </div>`;
  }
}
